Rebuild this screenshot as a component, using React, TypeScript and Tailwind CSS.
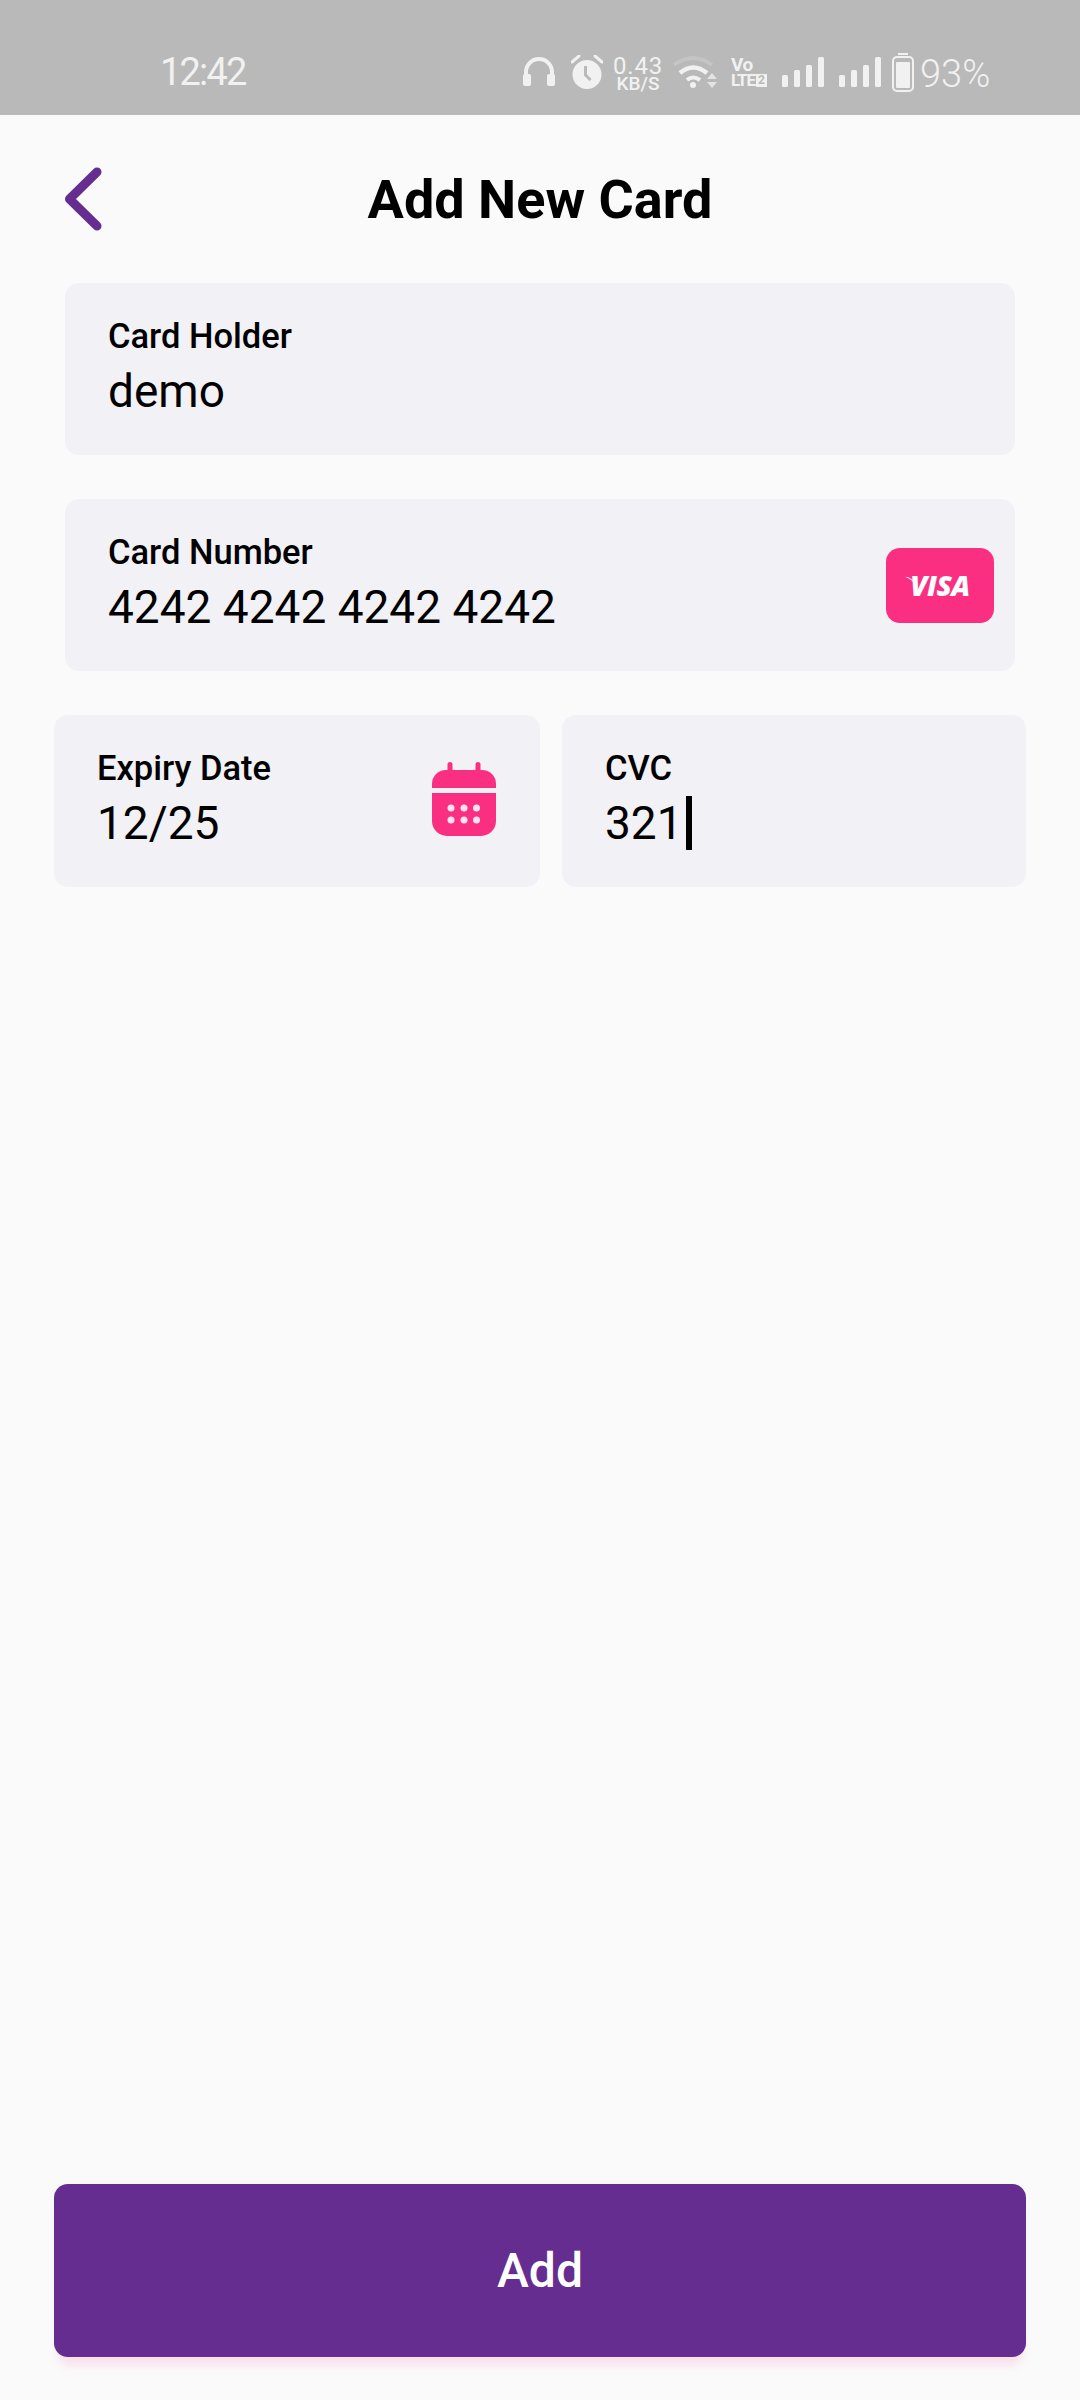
import React from "react";

function Field({ label, value, className, right, caret }: { label: string; value: string; className: string; right?: React.ReactNode; caret?: boolean }) {
  return (
    <div className={`h-[172px] rounded-[14px] bg-[#f2f1f6] flex items-center justify-between ${className}`}>
      <div className="pl-[43px]">
        <div className="text-[34.5px] leading-[44px] font-medium text-black">{label}</div>
        <div className="text-[46px] leading-[66px] text-black flex items-center">
          {value}
          {caret && <span className="inline-block w-[6px] h-[54px] bg-black ml-[3px]" />}
        </div>
      </div>
      {right}
    </div>
  );
}

function Signal({ className }: { className: string }) {
  return (
    <svg className={className} width="43" height="30" viewBox="0 0 43 30" fill="#f1f1f1">
      <rect x="0" y="18" width="6" height="12" rx="1.5" />
      <rect x="12" y="13" width="6" height="17" rx="1.5" />
      <rect x="24" y="8" width="6" height="22" rx="1.5" />
      <rect x="36" y="0" width="6" height="30" rx="1.5" />
    </svg>
  );
}

function StatusBar() {
  return (
    <div className="h-[115px] bg-[#b9b9b9] flex items-center pt-[29px] pl-[160px] text-[#f1f1f1] shrink-0">
      <span className="w-[85px] text-[38px] leading-[44px] tracking-[-1.8px] whitespace-nowrap">12:42</span>
      <svg className="ml-[278px]" width="32" height="30" viewBox="0 0 32 30" fill="#f1f1f1">
        <path d="M3 24V15a13 13 0 0 1 26 0v9" fill="none" stroke="#f1f1f1" strokeWidth="4" />
        <rect x="0" y="17" width="8" height="12" rx="2" />
        <rect x="24" y="17" width="8" height="12" rx="2" />
      </svg>
      <svg className="ml-[16px]" width="32" height="34" viewBox="0 0 32 34" fill="#f1f1f1">
        <circle cx="16" cy="19.5" r="14.5" />
        <path d="M1 7l7-6M31 7l-7-6" stroke="#f1f1f1" strokeWidth="3" strokeLinecap="round" />
        <path d="M14.5 11v9l5 5" fill="none" stroke="#b9b9b9" strokeWidth="3" />
      </svg>
      <div className="ml-[10px] w-[50px] flex flex-col items-center mt-[3px]">
        <span className="text-[24px] leading-[20px] tracking-[0.8px]">0.43</span>
        <span className="text-[19px] leading-[16px] font-medium">KB/S</span>
      </div>
      <svg className="ml-[10px]" width="45" height="36" viewBox="0 0 45 36" fill="none">
        <path d="M1 11Q20 -3 39 11" stroke="#f1f1f1" strokeOpacity="0.2" strokeWidth="4" />
        <path d="M7 19Q20 8 34 19" stroke="#f1f1f1" strokeWidth="4.5" />
        <path d="M14 26Q20 21 27 26" stroke="#f1f1f1" strokeWidth="4" />
        <circle cx="20" cy="31" r="3" fill="#f1f1f1" />
        <path d="M34 25l5-6 5 6zM34 28h10l-5 6z" fill="#f1f1f1" fillOpacity="0.75" />
      </svg>
      <div className="ml-[13px] w-[36px] flex flex-col font-bold">
        <span className="text-[19px] leading-[16px] tracking-[-0.5px]">Vo</span>
        <div className="flex items-center">
          <span className="text-[17px] leading-[15px] tracking-[-1.2px] w-[25px]">LTE</span>
          <span className="w-[11px] h-[13px] bg-[#f1f1f1] text-[#b9b9b9] text-[12px] leading-[13px] text-center">2</span>
        </div>
      </div>
      <Signal className="ml-[15px]" />
      <Signal className="ml-[14px]" />
      <svg className="ml-[10px]" width="22" height="39" viewBox="0 0 22 39" fill="#f1f1f1">
        <rect x="6" y="0" width="10" height="2" />
        <rect x="1" y="4" width="20" height="34" rx="4" fill="none" stroke="#f1f1f1" strokeWidth="2" />
        <rect x="4" y="9" width="14" height="26" rx="1" />
      </svg>
      <span className="ml-[6px] text-[38px] leading-[44px] font-light mt-[4px]">93%</span>
    </div>
  );
}

export default function App() {
  return (
    <div className="w-[1080px] h-[2400px] bg-[#fafafa] flex flex-col font-['Roboto',sans-serif]">
      <StatusBar />
      <div className="relative h-[168px] flex items-center justify-center shrink-0">
        <svg className="absolute left-[60px] top-[49px]" width="46" height="72" viewBox="0 0 46 72" fill="none">
          <path d="M37 8 L9.5 35 L37 62" stroke="#652d90" strokeWidth="9" strokeLinecap="round" strokeLinejoin="round" />
        </svg>
        <h1 className="text-[54px] font-bold text-black">Add New Card</h1>
      </div>
      <div className="flex flex-col gap-[44px] px-[54px]">
        <div className="px-[11px] flex flex-col gap-[44px]">
          <Field label="Card Holder" value="demo" className="w-full" />
          <Field
            label="Card Number"
            value="4242 4242 4242 4242"
            className="w-full"
            right={
              <div className="mr-[21px] w-[108px] h-[75px] rounded-[14px] bg-[#fb2f82] flex items-center justify-center text-white">
                <span className="relative text-[28px] leading-[30px] font-extrabold italic font-['Open_Sans',sans-serif] tracking-[-0.5px]">
                  <svg className="absolute left-[-5px] top-[5px]" width="13" height="13" viewBox="0 0 16 14" fill="#ffffff">
                    <path d="M0 1 Q9 1 15 13 Q10 5 0 1z" />
                  </svg>
                  VISA
                </span>
              </div>
            }
          />
        </div>
        <div className="flex gap-[22px]">
          <Field
            label="Expiry Date"
            value="12/25"
            className="w-[486px]"
            right={
              <svg className="mr-[44px] mb-[4px]" width="64" height="74" viewBox="0 0 64 74" fill="#fb2f82">
                <rect x="15.5" y="0" width="5" height="12" rx="2.5" />
                <rect x="43.5" y="0" width="5" height="12" rx="2.5" />
                <path d="M14 8h36a14 14 0 0 1 14 14v4H0v-4A14 14 0 0 1 14 8z" />
                <path d="M0 31h64v28a15 15 0 0 1-15 15H15A15 15 0 0 1 0 59z" />
                <g fill="#fde3ee">
                  <circle cx="19" cy="46" r="3.5" />
                  <circle cx="32" cy="46" r="3.5" />
                  <circle cx="44.5" cy="46" r="3.5" />
                  <circle cx="19" cy="58" r="3.5" />
                  <circle cx="32" cy="58" r="3.5" />
                  <circle cx="44.5" cy="58" r="3.5" />
                </g>
              </svg>
            }
          />
          <Field label="CVC" value="321" className="flex-1" caret />
        </div>
      </div>
      <div className="mt-auto px-[54px] pb-[43px]">
        <button className="w-full h-[173px] rounded-[14px] bg-[#652d90] text-white text-[48px] font-medium shadow-[0_12px_10px_-4px_rgba(251,47,130,0.13)]">
          Add
        </button>
      </div>
    </div>
  );
}
